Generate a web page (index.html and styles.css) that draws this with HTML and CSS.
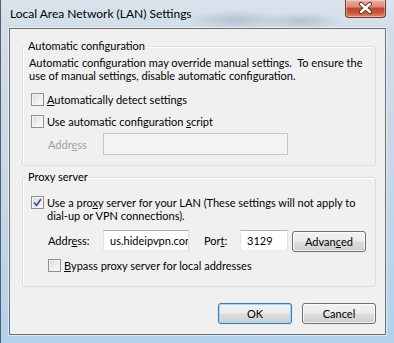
FILE: index.html
```html
<!DOCTYPE html>
<html>
<head>
<meta charset="utf-8">
<link rel="stylesheet" href="styles.css">
</head>
<body>
<div class="window">
  <div class="titlebar">
    <span class="title">Local Area Network (LAN) Settings</span>
    <div class="close">
      <svg width="41" height="18" viewBox="0 0 41 18">
        <path d="M16 5 L25 13 M25 5 L16 13" stroke="#4a2a22" stroke-width="4.2" stroke-linecap="round" fill="none"/>
        <path d="M16 5 L25 13 M25 5 L16 13" stroke="#ffffff" stroke-width="2.4" stroke-linecap="round" fill="none"/>
      </svg>
    </div>
  </div>
  <div class="client">
    <div class="group g1">
      <span class="legend">Automatic configuration</span>
      <p class="desc">Automatic configuration may override manual settings.&nbsp; To ensure the<br>use of manual settings, disable automatic configuration.</p>
      <div class="check c1"><span class="box"></span><span class="ctext"><u>A</u>utomatically detect settings</span></div>
      <div class="check c2"><span class="box"></span><span class="ctext">Use automatic configuration <u>s</u>cript</span></div>
      <div class="row arow">
        <span class="lbl disabled">Addr<u>e</u>ss</span>
        <span class="input wide disabled"></span>
      </div>
    </div>
    <div class="group g2">
      <span class="legend">Proxy server</span>
      <div class="check c3">
        <span class="box checked">
          <svg width="11" height="11" viewBox="0 0 11 11"><path d="M2 5.5 L4.5 8.5 L9 2" stroke="#3d5796" stroke-width="1.8" fill="none" stroke-linejoin="round"/></svg>
        </span>
        <span class="ctext">Use a pro<u>x</u>y server for your LAN (These settings will not apply to<br>dial-up or VPN connections).</span>
      </div>
      <div class="row prow">
        <span class="lbl">Addr<u>e</u>ss:</span>
        <span class="input addr">us.hideipvpn.com</span>
        <span class="lbl port">Por<u>t</u>:</span>
        <span class="input portin">3129</span>
        <span class="btn adv">Advan<u>c</u>ed</span>
      </div>
      <div class="check c4"><span class="box"></span><span class="ctext"><u>B</u>ypass proxy server for local addresses</span></div>
    </div>
    <div class="buttons">
      <span class="btn default">OK</span>
      <span class="btn">Cancel</span>
    </div>
  </div>
</div>
</body>
</html>
```

FILE: styles.css
```css
* { box-sizing: border-box; }

body {
  margin: 0;
  width: 394px;
  height: 343px;
  overflow: hidden;
  font-family: "Lato", "Open Sans", sans-serif;
  font-size: 11px;
  color: #000;
  background: #bcd2e6;
}

u { text-decoration: underline; text-underline-offset: 1px; }

.window {
  width: 394px;
  height: 343px;
  display: flex;
  flex-direction: column;
  padding: 0 8px 8px 8px;
  border-left: 1px solid #53606d;
  background:
    radial-gradient(ellipse 50px 10px at 235px 20px, rgba(120,140,160,0.35), rgba(120,140,160,0) 100%),
    radial-gradient(ellipse 40px 9px at 300px 21px, rgba(120,140,160,0.35), rgba(120,140,160,0) 100%),
    linear-gradient(to bottom, #dbe4ed 0px, #d2dde8 28px, #c4d6e7 60%, #b3d1ec 100%);
}

.titlebar {
  height: 28px;
  flex: none;
  display: flex;
  justify-content: space-between;
  align-items: flex-start;
  margin-left: -7px;
  padding-left: 8px;
}

.title {
  font-size: 12px;
  line-height: 16px;
  margin-top: 6px;
  color: #000;
}

.close {
  width: 41px;
  height: 18px;
  border: 1px solid #6b3b31;
  border-top: none;
  border-radius: 0 0 4px 4px;
  background: linear-gradient(to bottom, #e9b2a3 0%, #d98a75 40%, #c2452b 50%, #c9553a 75%, #e08c6b 100%);
  box-shadow: inset 0 0 0 1px rgba(255,255,255,0.35);
}
.close svg { display: block; margin: -1px 0 0 -1px; }

.client {
  flex: 1;
  border: 1px solid #6b7075;
  box-shadow: 0 0 0 1px rgba(255,255,255,0.55);
  background: #f0f0f0;
  padding: 17px 10px 0 12px;
  display: flex;
  flex-direction: column;
}

.group {
  position: relative;
  width: 354px;
  border: 1px solid #d5dfe5;
  border-radius: 3px;
  box-shadow: inset 1px 1px 0 #ffffff;
}

.legend {
  position: absolute;
  top: -9px;
  left: 3px;
  padding: 0 2px;
  background: #f0f0f0;
  line-height: 15px;
}

.g1 {
  height: 120px;
  padding: 9px 4px 0 6px;
}

.g2 {
  margin-top: 11px;
  height: 110px;
  padding: 18px 4px 0 6px;
}

.desc {
  margin: 0;
  line-height: 13px;
  white-space: nowrap;
}

.check {
  display: flex;
  align-items: flex-start;
  margin-left: 2px;
  line-height: 13px;
  white-space: nowrap;
}
.c1 { margin-top: 11px; }
.c2 { margin-top: 9px; }
.c3 { margin-top: 0; }
.c4 { margin-top: 8px; margin-left: 19px; }

.box {
  flex: none;
  width: 13px;
  height: 13px;
  margin-right: 3px;
  border: 1px solid #8e8f8f;
  background: linear-gradient(135deg, #d9d9d9 0%, #f0f0f0 60%, #fbfbfb 100%);
  box-shadow: inset 0 0 0 1px #f4f4f4;
}
.box.checked svg { display: block; margin: 0; }

.row {
  display: flex;
  align-items: center;
}
.arow { margin-top: 5px; padding-left: 19px; }
.prow { margin-top: 8px; padding-left: 19px; }

.lbl { width: 55px; line-height: 13px; white-space: nowrap; }
.disabled { color: #9f9f9f; }

.input {
  flex: none;
  height: 21px;
  border: 1px solid #abadb3;
  border-right-color: #dbdfe6;
  border-bottom-color: #e3e9ef;
  border-left-color: #e2e3ea;
  background: #fff;
  padding: 3px 0 0 6px;
  line-height: 13px;
  overflow: hidden;
  white-space: nowrap;
}
.input.wide { width: 185px; height: 22px; background: #f4f4f4; border-color: #c4c6cb; }
.input.addr { width: 86px; }
.lbl.port { width: 36px; margin-left: 15px; }
.input.portin { width: 48px; }

.btn {
  flex: none;
  display: flex;
  align-items: center;
  justify-content: center;
  width: 74px;
  height: 21px;
  border: 1px solid #707070;
  border-radius: 3px;
  background: linear-gradient(to bottom, #f2f2f2 0%, #ebebeb 48%, #dddddd 52%, #cfcfcf 100%);
  box-shadow: inset 0 0 0 1px rgba(255,255,255,0.7);
  line-height: 13px;
}
.btn.adv { margin-left: 4px; margin-top: 1px; margin-bottom: -1px; }

.buttons {
  display: flex;
  justify-content: flex-end;
  gap: 10px;
  margin-top: 16px;
  margin-right: -1px;
}
.btn.default {
  border-color: #3c7fb1;
  background: linear-gradient(to bottom, #f2f2f2 0%, #ebebeb 48%, #dddddd 52%, #cfcfcf 100%);
  box-shadow: inset 0 0 0 1px #9fd5f5, 0 0 1px rgba(60,127,177,0.6);
}
```
